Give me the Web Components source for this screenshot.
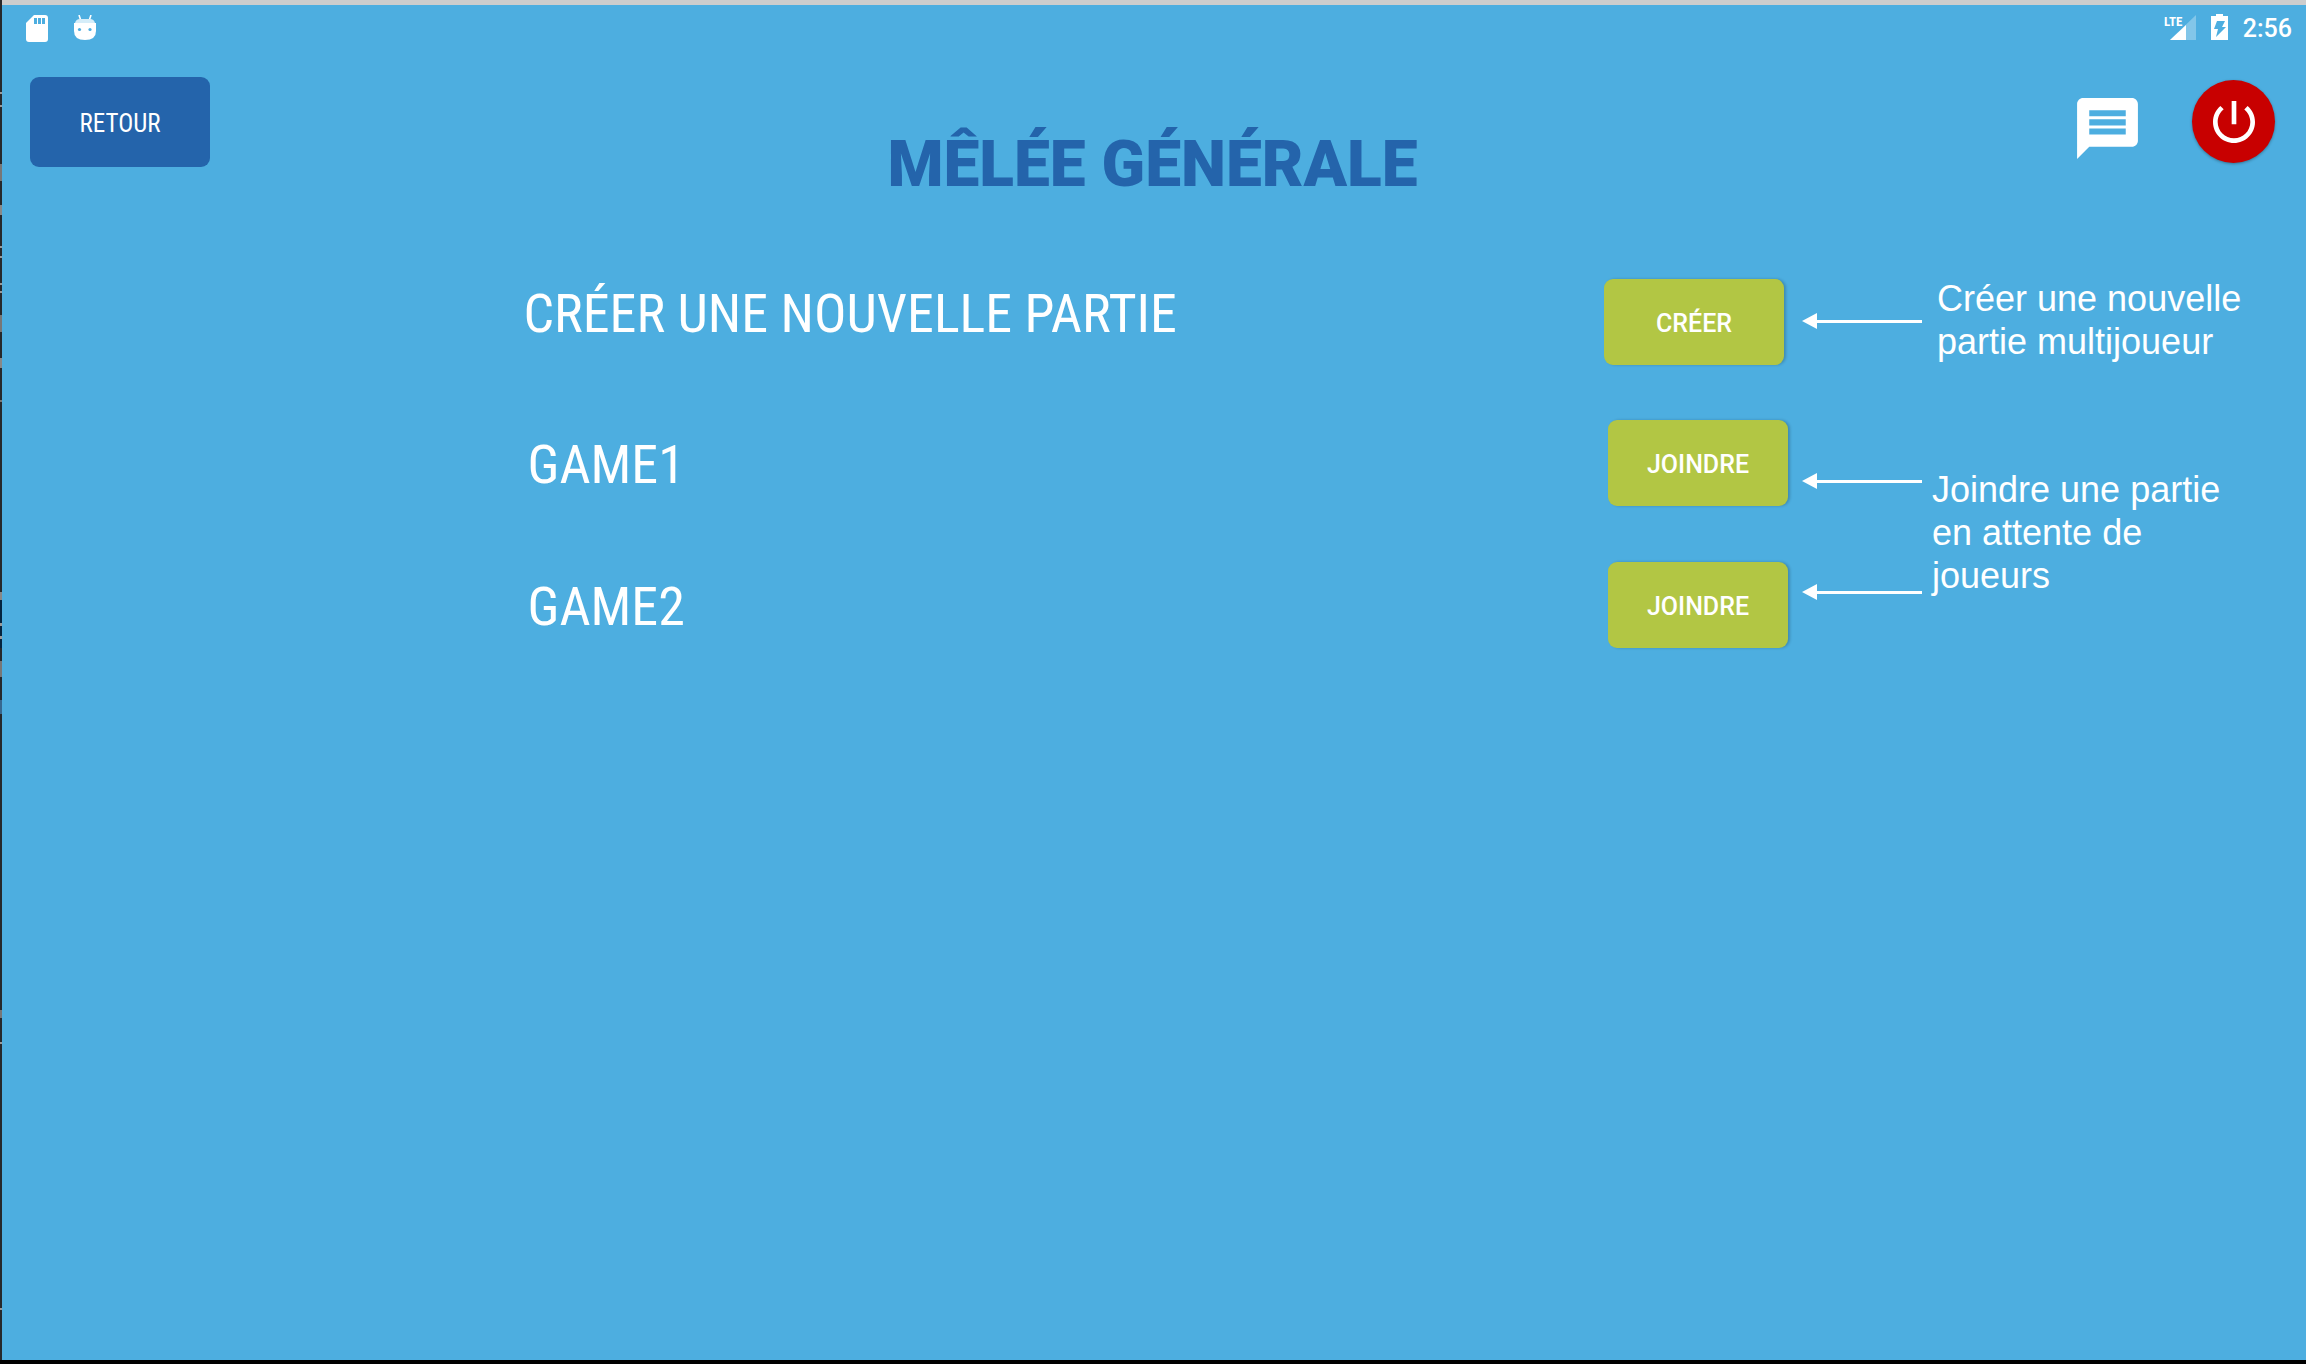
<!DOCTYPE html>
<html lang="fr">
<head>
<meta charset="utf-8">
<title>Mêlée générale</title>
<style>
html, body { margin: 0; height: 100%; }
body { font-family: Roboto, sans-serif; color: #fff; background: #4daee0; overflow: hidden; }
</style>
</head>
<body>
<lobby-screen></lobby-screen>
<script>
class BaseElement extends HTMLElement {
  constructor() {
    super();
    this.attachShadow({ mode: 'open' }).innerHTML = this.view();
  }
}

customElements.define('status-bar', class extends BaseElement {
  view() {
    return `<style>
      :host { display: flex; justify-content: space-between; align-items: center; height: 46px; padding: 0 14px 0 24px; }
      .group { display: flex; align-items: center; }
      .left { gap: 26px; }
      .right { gap: 15px; }
      svg { display: block; }
      .right svg { margin-bottom: 2px; }
      time { padding-top: 2px; font: 500 25px/30px Roboto, sans-serif; }
      text { font: 700 13px "Roboto Condensed", "Liberation Sans Narrow", Roboto, sans-serif; }
    </style>
    <div class="group left">
      <svg width="22" height="27" viewBox="0 0 22 27"><path fill="#fff" d="M8 0h11q3 0 3 3v21q0 3-3 3H3q-3 0-3-3V8z"/><path fill="#4daee0" d="M8 3h3v6H8zM12 3h3v6h-3zM16 3h3v6h-3z"/></svg>
      <svg width="22" height="26" viewBox="0 0 22 26"><path stroke="#fff" stroke-width="1.6" d="M5 0l2 6M17 0l-2 6"/><path fill="#d5edf9" d="M1 8q1-4 5-4h10q4 0 5 4z"/><path fill="#fff" d="M0 8h22v8q0 9-11 9T0 16z"/><circle cx="5.500" cy="14.500" r="1.600" fill="#4daee0"/><circle cx="16" cy="14.500" r="1.600" fill="#4daee0"/></svg>
    </div>
    <div class="group right">
      <svg width="32" height="28" viewBox="0 0 32 28"><path fill="#fff" opacity=".3" d="M32 2v25H6z"/><path fill="#fff" d="M22 12v15H6z"/><text x="0" y="13" fill="#fff">LTE</text></svg>
      <svg width="17" height="26" viewBox="0 0 17 26"><path fill="#fff" d="M0 2h5V0h7v2h5v24H0z"/><path fill="#4daee0" d="M6 7h8l-3 6h4L5 23l2-8H3z"/></svg>
      <time>2:56</time>
    </div>`;
  }
});

customElements.define('app-button', class extends BaseElement {
  view() {
    return `<style>
      :host { display: block; width: 180px; height: 86px; }
      button { width: 100%; height: 100%; border: 0; border-radius: 9px; padding: 3px 0 0; color: #fff;
        background: #b2c644; font: 500 25px/30px Roboto, sans-serif; box-shadow: 2px 0 3px #0003; }
      :host([kind="back"]) { height: 90px; }
      :host([kind="back"]) button { background: #2464ab; box-shadow: none; font: 400 25px/30px "Roboto Condensed", "Liberation Sans Narrow", Roboto, sans-serif; }
    </style><button type="button"><slot></slot></button>`;
  }
});

customElements.define('icon-button', class extends BaseElement {
  view() {
    return `<style>
      :host { display: block; }
      button { display: grid; place-items: center; border: 0; padding: 0; background: none; color: #fff; }
      :host([kind="power"]) button { width: 83px; height: 83px; border-radius: 50%; background: #c80000; box-shadow: 0 1px 3px #0005; }
    </style><button type="button" aria-label="${this.getAttribute('label')}"><slot></slot></button>`;
  }
});

customElements.define('top-bar', class extends BaseElement {
  view() {
    return `<style>
      :host { display: grid; grid-template-columns: 1fr auto 1fr; align-items: start; padding: 26px 31px 0 28px; height: 203px; box-sizing: border-box; }
      h1 { margin: 50px 0 0; color: #2464ab; font: 900 64px/76px Roboto, sans-serif; white-space: nowrap; }
      nav { display: flex; justify-content: flex-end; align-items: center; gap: 48px; padding-top: 3px; }
      svg { display: block; }
    </style>
    <app-button kind="back">RETOUR</app-button>
    <h1>MÊLÉE GÉNÉRALE</h1>
    <nav>
      <icon-button label="Messages"><svg width="73" height="75" viewBox="0 -2.600 24 24.600"><path fill="#fff" d="M20 2H4c-1.100 0-2 .9-2 2v18l4-4h14c1.100 0 2-.9 2-2V4c0-1.100-.9-2-2-2zm-2 12H6v-2h12v2zm0-3H6V9h12v2zm0-3H6V6h12v2z"/></svg></icon-button>
      <icon-button kind="power" label="Quitter"><svg width="56" height="56" viewBox="0 0 24 24"><path fill="#fff" d="M13 3h-2v10h2V3zm4.830 2.170l-1.420 1.420C17.990 7.860 19 9.810 19 12c0 3.870-3.130 7-7 7s-7-3.130-7-7c0-2.190 1.010-4.140 2.580-5.420L6.170 5.170C4.230 6.820 3 9.260 3 12c0 4.970 4.030 9 9 9s9-4.030 9-9c0-2.740-1.230-5.180-3.170-6.830z"/></svg></icon-button>
    </nav>`;
  }
});

customElements.define('game-row', class extends BaseElement {
  view() {
    return `<style>
      :host { display: flex; justify-content: space-between; align-items: center; height: 86px; padding-left: 4px; }
      h2 { margin: 0; padding-top: 3px; font: 400 54px/64px "Roboto Condensed", "Liberation Sans Narrow", Roboto, sans-serif; white-space: nowrap; }
      :host([create]) { padding: 0 4px 0 0; height: 84px; }
      :host([create]) h2 { padding: 0 0 16px; }
    </style><h2><slot></slot></h2><app-button>${this.getAttribute('action')}</app-button>`;
  }
});

customElements.define('callout-arrow', class extends BaseElement {
  view() {
    return `<style>
      :host { display: flex; align-items: center; height: 16px; }
      i { border: solid transparent; border-width: 8px 15px 8px 0; border-right-color: #fff; }
      b { flex: 1; height: 3px; background: #fff; }
    </style><i></i><b></b>`;
  }
});

customElements.define('callout-note', class extends BaseElement {
  view() {
    return `<style>
      :host { display: grid; grid-template-columns: 120px 1fr; }
      .arrows { display: flex; flex-direction: column; gap: 95px; }
      p { margin: 0; font: 36px/43px "Liberation Sans", Arial, sans-serif; }
      :host([kind="join"]) p { padding: 0 60px 0 10px; }
      :host([kind="join"]) .arrows { padding-top: 5px; }
      :host([kind="create"]) .arrows { padding-top: 36px; }
      :host([kind="create"]) p { padding: 0 40px 0 15px; }
    </style>
    <div class="arrows">${'<callout-arrow></callout-arrow>'.repeat(+this.getAttribute('arrows'))}</div>
    <p><slot></slot></p>`;
  }
});

// Slivers of the window behind, seen along the left edge: [top, height, colour]
const SLIVERS = [[92, 2, '#999'], [105, 2, '#999'], [164, 17, '#777'], [205, 10, '#888'], [246, 2, '#999'], [256, 2, '#999'],
  [283, 2, '#999'], [291, 2, '#999'], [315, 17, '#777'], [358, 10, '#888'], [400, 2, '#777'], [592, 8, '#888'],
  [600, 48, '#04243f'], [623, 3, '#999'], [636, 3, '#999'], [661, 16, '#777'], [700, 14, '#37688f'], [1010, 8, '#777'], [1042, 2, '#999'], [1308, 2, '#999']];

customElements.define('window-edge', class extends BaseElement {
  view() {
    return `<style>
      :host { display: block; width: 2px; background: #26282b; }
      svg { display: block; width: 100%; height: 100%; }
    </style><svg aria-hidden="true">${SLIVERS.map(([y, h, c]) => `<rect y="${y}" width="2" height="${h}" fill="${c}"/>`).join('')}</svg>`;
  }
});

customElements.define('lobby-screen', class extends BaseElement {
  view() {
    return `<style>
      :host { display: grid; grid-template-columns: 2px 1fr; box-sizing: border-box; height: 100vh; background: #4daee0; border-bottom: 4px solid #000; }
      .app { display: flex; flex-direction: column; border-top: 5px solid #cdcdcd; }
      main { flex: 1; display: grid; grid-template-columns: 1fr 504px; gap: 14px; align-items: start; padding-top: 23px; }
      .games { display: flex; flex-direction: column; gap: 56px; padding: 3px 0 0 29.200%; }
      .notes { display: flex; flex-direction: column; gap: 105px; }
    </style>
    <window-edge></window-edge>
    <div class="app">
      <status-bar></status-bar>
      <top-bar></top-bar>
      <main>
        <section class="games">
          <game-row create action="CRÉER">CRÉER UNE NOUVELLE PARTIE</game-row>
          <game-row action="JOINDRE">GAME1</game-row>
          <game-row action="JOINDRE">GAME2</game-row>
        </section>
        <aside class="notes">
          <callout-note kind="create" arrows="1">Créer une nouvelle partie multijoueur</callout-note>
          <callout-note kind="join" arrows="2">Joindre une partie en attente de joueurs</callout-note>
        </aside>
      </main>
    </div>`;
  }
});
</script>
</body>
</html>
